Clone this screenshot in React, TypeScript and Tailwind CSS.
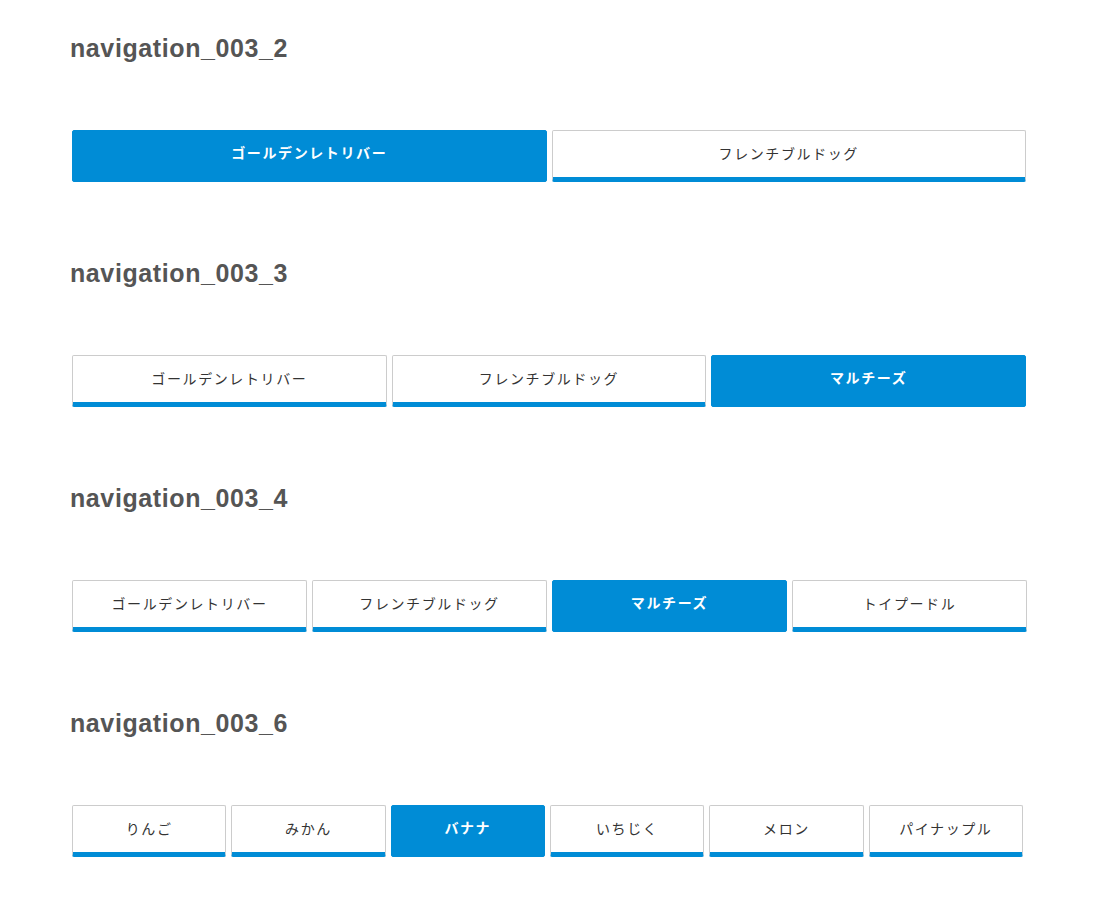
const sections: { title: string; items: string[]; active: number; width: string }[] = [
  { title: 'navigation_003_2', items: ['ゴールデンレトリバー', 'フレンチブルドッグ'], active: 0, width: 'w-[954px]' },
  { title: 'navigation_003_3', items: ['ゴールデンレトリバー', 'フレンチブルドッグ', 'マルチーズ'], active: 2, width: 'w-[954px]' },
  { title: 'navigation_003_4', items: ['ゴールデンレトリバー', 'フレンチブルドッグ', 'マルチーズ', 'トイプードル'], active: 2, width: 'w-[955px]' },
  { title: 'navigation_003_6', items: ['りんご', 'みかん', 'バナナ', 'いちじく', 'メロン', 'パイナップル'], active: 2, width: 'w-[951px]' },
];

const Tabs = ({ items, active, width }: { items: string[]; active: number; width: string }) => (
  <ul className={`flex gap-[5px] ml-[2px] ${width}`}>
    {items.map((label, i) => (
      <li key={label} className="flex-1">
        <a
          className={
            i === active
              ? 'flex items-center justify-center h-[52px] pb-[5px] rounded-[2px] bg-[#008cd6] border border-[#008cd6] text-white font-semibold text-[14px] tracking-[1.6px]'
              : 'flex items-center justify-center h-[52px] rounded-[2px] bg-white border border-[#cccccc] border-b-[5px] border-b-[#008cd6] text-[#333333] text-[14px] tracking-[1.6px]'
          }
        >
          {label}
        </a>
      </li>
    ))}
  </ul>
);

export default function App() {
  return (
    <div className="bg-white min-h-[897px] px-[70px] pt-[32px] font-['Liberation_Sans','Noto_Sans_CJK_JP',sans-serif]">
      {sections.map((s) => (
        <section key={s.title} className="h-[225px]">
          <h2 className="text-[25px] leading-[32px] font-bold text-[#555555] tracking-[0.6px]">{s.title}</h2>
          <div className="mt-[66px]">
            <Tabs items={s.items} active={s.active} width={s.width} />
          </div>
        </section>
      ))}
    </div>
  );
}
